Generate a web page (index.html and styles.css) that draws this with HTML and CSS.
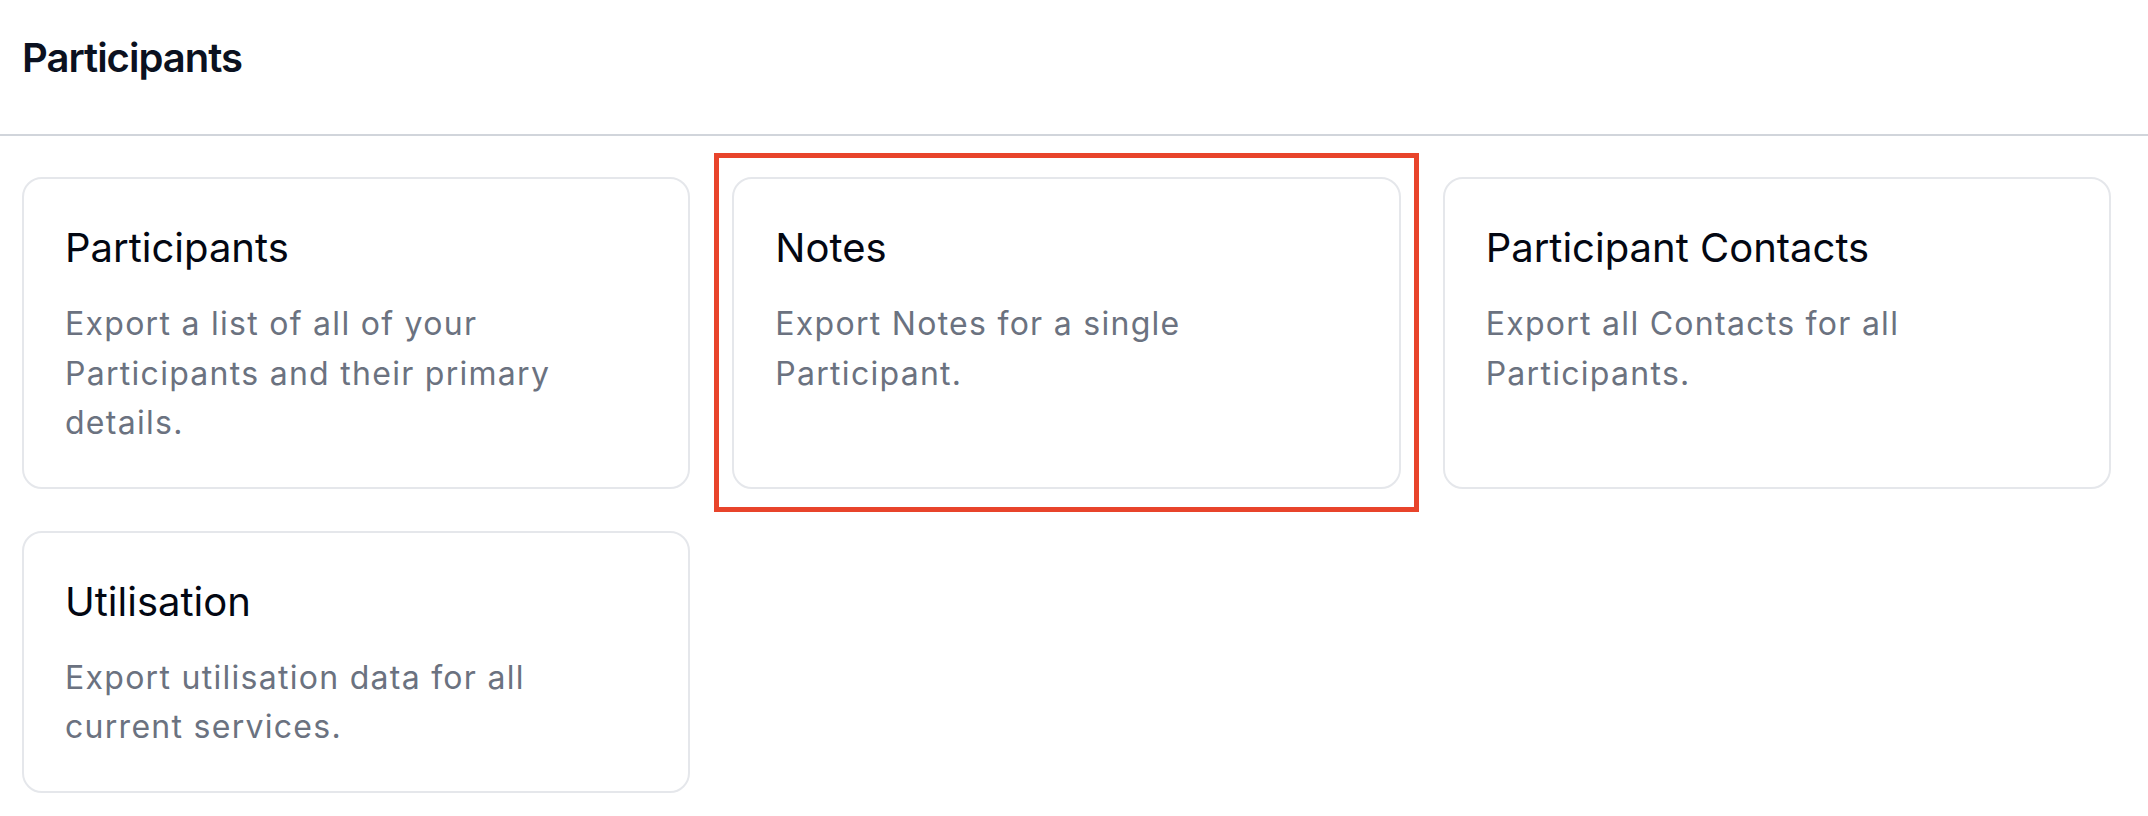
FILE: index.html
```html
<!DOCTYPE html>
<html>
  <head>
    <meta charset="utf-8">
    <title>Participants</title>
    <link rel="stylesheet" href="styles.css">
  </head>
  <body>
    <div class="page-header">
      <h1 class="page-title">Participants</h1>
    </div>

    <div class="export-grid">
      <div class="export-card">
        <h2 class="card-title">Participants</h2>
        <p class="card-desc">Export a list of all of your Participants and their primary details.</p>
      </div>
      <div class="export-card is-highlighted">
        <h2 class="card-title">Notes</h2>
        <p class="card-desc">Export Notes for a single Participant.</p>
        <div class="highlight-box"></div>
      </div>
      <div class="export-card">
        <h2 class="card-title">Participant Contacts</h2>
        <p class="card-desc">Export all Contacts for all Participants.</p>
      </div>
      <div class="export-card">
        <h2 class="card-title">Utilisation</h2>
        <p class="card-desc">Export utilisation data for all current services.</p>
      </div>
    </div>
  </body>
</html>
```

FILE: styles.css
```css
body {
  margin: 0;
  background: #fff;
  font-family: Inter, "Noto Sans", sans-serif;
}

.page-header {
  padding: 28px 22px 46px 22px;
  border-bottom: 2px solid #d1d5db;
}
.page-title {
  margin: 0;
  font-size: 40px;
  line-height: 60px;
  font-weight: 600;
  letter-spacing: -1px;
  color: #0b1120;
}

.export-grid {
  display: grid;
  grid-template-columns: repeat(3, 1fr);
  gap: 42px;
  padding: 41px 37px 0 22px;
}

.export-card {
  position: relative;
  border: 2px solid #e5e7eb;
  border-radius: 20px;
  padding: 39px 60px 39px 41px;
  background: #fff;
}
.card-title {
  margin: 0 0 21px 0;
  font-size: 40px;
  line-height: 60px;
  font-weight: 400;
  color: #030712;
}
.card-desc {
  margin: 0;
  font-size: 32px;
  line-height: 49.5px;
  letter-spacing: 1.28px;
  color: #6b7280;
}

/* red annotation round the Notes card */
.highlight-box {
  position: absolute;
  left: -20px;
  right: -20px;
  top: -26px;
  bottom: -25px;
  border: 5px solid #e8442b;
  pointer-events: none;
}
```
